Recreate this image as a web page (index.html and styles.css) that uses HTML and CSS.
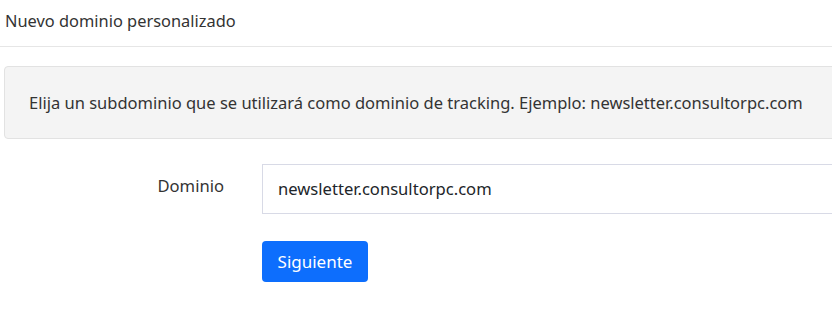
FILE: index.html
```html
<!DOCTYPE html>
<html lang="es">
<head>
<meta charset="utf-8">
<title>Nuevo dominio personalizado</title>
<link rel="stylesheet" href="styles.css">
</head>
<body>
<div class="page">
  <div class="header">Nuevo dominio personalizado</div>
  <div class="content">
    <div class="alert">Elija un subdominio que se utilizará como dominio de tracking. Ejemplo: newsletter.consultorpc.com</div>
    <form class="form">
      <label class="label" for="dominio">Dominio</label>
      <input class="input" id="dominio" type="text" value="newsletter.consultorpc.com">
      <div class="actions">
        <button type="button" class="btn">Siguiente</button>
      </div>
    </form>
  </div>
</div>
</body>
</html>
```
FILE: styles.css
```css
html, body {
  margin: 0;
  padding: 0;
  background: #fff;
  overflow: hidden;
}
body {
  font-family: "Noto Sans", "Open Sans", sans-serif;
  color: #212529;
}
.page {
  width: 900px;
}
.header {
  font-size: 16.4px;
  color: #333;
  padding: 9px 5px 0;
  border-bottom: 1px solid #e6e6e6;
  box-sizing: border-box;
  height: 47px;
}
.content {
  padding: 19px 0 0 4px;
}
.alert {
  background: #f4f4f4;
  border: 1px solid #e2e2e2;
  border-radius: 4px;
  height: 73px;
  box-sizing: border-box;
  padding: 0 0 0 24px;
  display: flex;
  align-items: center;
  font-size: 16.5px;
  color: #333;
}
.form {
  display: grid;
  grid-template-columns: 258px 1fr;
  row-gap: 27px;
  margin-top: 25px;
}
.label {
  justify-self: end;
  align-self: start;
  padding-top: 10px;
  padding-right: 38px;
  font-size: 16.6px;
  color: #333;
}
.input {
  height: 50px;
  box-sizing: border-box;
  border: 1px solid #d8dae6;
  border-radius: 0;
  padding: 0 15px 2px;
  font: inherit;
  font-size: 16.6px;
  color: #212529;
  outline: none;
}
.actions {
  grid-column: 2;
}
.btn {
  background: #0d6efd;
  color: #fff;
  border: none;
  border-radius: 4px;
  width: 106px;
  height: 41px;
  font: inherit;
  font-size: 17px;
  cursor: pointer;
}
```
